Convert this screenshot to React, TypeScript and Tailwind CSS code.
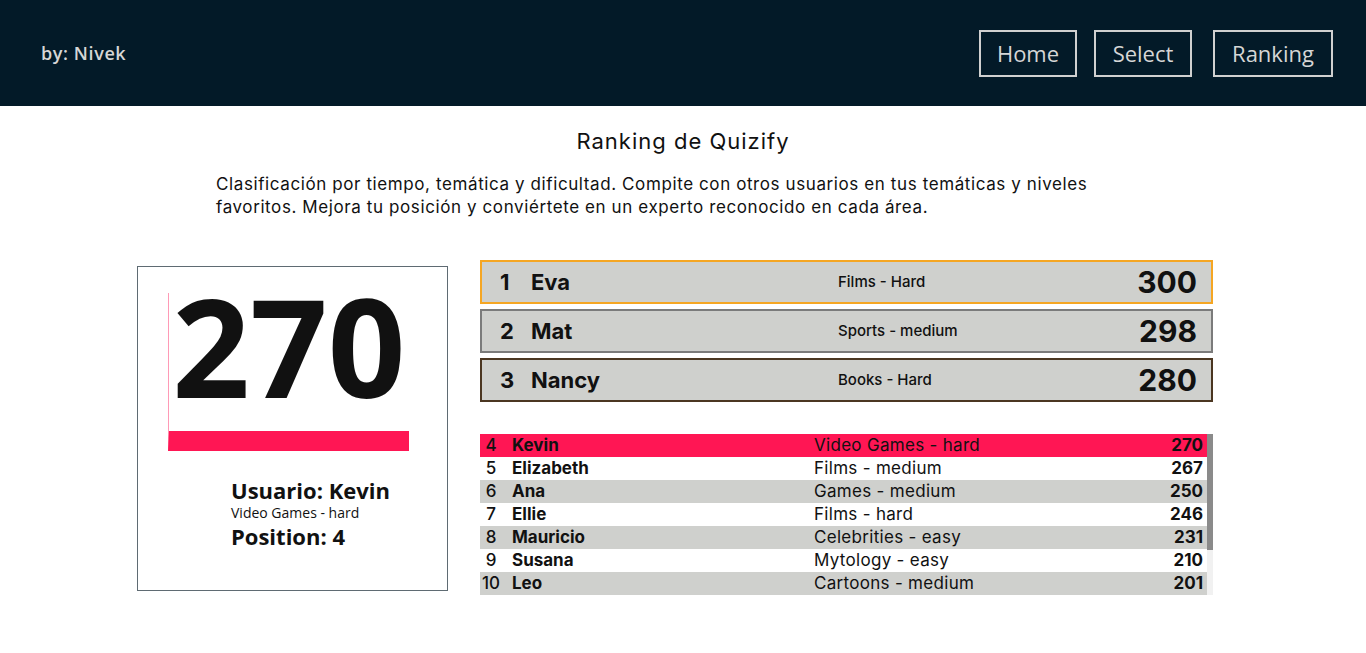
import React from 'react';

const top3 = [
  { pos: 1, name: 'Eva', cat: 'Films - Hard', score: 300, border: 'border-[#f5a623]' },
  { pos: 2, name: 'Mat', cat: 'Sports - medium', score: 298, border: 'border-[#7b7b7b]' },
  { pos: 3, name: 'Nancy', cat: 'Books - Hard', score: 280, border: 'border-[#4b3621]' },
];

const rest = [
  { pos: 4, name: 'Kevin', cat: 'Video Games - hard', score: 270 },
  { pos: 5, name: 'Elizabeth', cat: 'Films - medium', score: 267 },
  { pos: 6, name: 'Ana', cat: 'Games - medium', score: 250 },
  { pos: 7, name: 'Ellie', cat: 'Films - hard', score: 246 },
  { pos: 8, name: 'Mauricio', cat: 'Celebrities - easy', score: 231 },
  { pos: 9, name: 'Susana', cat: 'Mytology - easy', score: 210 },
  { pos: 10, name: 'Leo', cat: 'Cartoons - medium', score: 201 },
];

const grotesk = "font-['Inter','Liberation_Sans',sans-serif]";
const humanist = "font-['Open_Sans','Noto_Sans',sans-serif]";

function Header() {
  return (
    <header className="h-[106px] bg-[#031a28] flex items-center justify-between pl-[41px] pr-[33px]">
      <span className={`${humanist} text-[18px] font-semibold tracking-[0.6px] text-[#d6d6d6]`}>by: Nivek</span>
      <nav className={`${humanist} flex items-center text-[22px] text-[#d6d6d6]`}>
        <a className="w-[98px] h-[47px] border-2 border-[#d0d0d0] flex items-center justify-center">Home</a>
        <a className="ml-[17px] w-[98px] h-[47px] border-2 border-[#d0d0d0] flex items-center justify-center">Select</a>
        <a className="ml-[21px] w-[120px] h-[47px] border-2 border-[#d0d0d0] flex items-center justify-center">Ranking</a>
      </nav>
    </header>
  );
}

function UserCard() {
  return (
    <div className={`${humanist} mt-[6px] w-[311px] h-[325px] border border-[#5f6b73] pt-[26px] pl-[30px]`}>
      <div className="w-[241px] h-[158px] border-l border-l-[#ff9ab6] border-b-[20px] border-b-[#ff1654] text-center text-[136px] leading-[106px] font-bold text-[#111]">
        270
      </div>
      <div className="pl-[63px] pt-[26px] text-[#111]">
        <p className="text-[22px] leading-[26px] font-bold">Usuario: Kevin</p>
        <p className="text-[14px] leading-[20px]">Video Games - hard</p>
        <p className="text-[22px] leading-[26px] font-bold">Position: 4</p>
      </div>
    </div>
  );
}

function Podium() {
  return (
    <div className="flex flex-col gap-[5px]">
      {top3.map((p) => (
        <div
          key={p.pos}
          className={`h-[44px] border-2 ${p.border} bg-[#cfd0cd] flex items-center pl-[18px] pr-[14px] text-[#111]`}
        >
          <span className="w-[31px] text-[22px] font-bold">{p.pos}</span>
          <span className="w-[307px] text-[22px] font-bold">{p.name}</span>
          <span className="flex-1 text-[15px] font-medium">{p.cat}</span>
          <span className="text-[30px] font-bold">{p.score}</span>
        </div>
      ))}
    </div>
  );
}

function RankList() {
  return (
    <div className="mt-[32px] flex">
      <div className="flex-1">
        {rest.map((r, i) => (
          <div
            key={r.pos}
            className={`h-[23px] flex items-center text-[17px] text-[#111] pr-[4px] ${
              r.pos === 4 ? 'bg-[#ff1654]' : i % 2 === 0 ? 'bg-[#cfd0cd]' : 'bg-white'
            }`}
          >
            <span className="w-[22px] text-center font-medium">{r.pos}</span>
            <span className="ml-[10px] w-[302px] font-bold">{r.name}</span>
            <span className="flex-1 tracking-[0.3px]">{r.cat}</span>
            <span className="font-bold">{r.score}</span>
          </div>
        ))}
      </div>
      <div className="w-[6px] bg-[#f1f1f1]">
        <div className="h-[116px] bg-[#8a8a8a]" />
      </div>
    </div>
  );
}

export default function App() {
  return (
    <div className={`${grotesk} min-h-[653px] bg-white`}>
      <Header />
      <main>
        <h1 className="pt-[21px] text-center text-[22px] leading-[28px] tracking-[1px] text-[#111]">Ranking de Quizify</h1>
        <p className="mt-[18px] ml-[216px] w-[900px] text-[17px] leading-[23px] tracking-[0.6px] text-[#111]">
          Clasificación por tiempo, temática y dificultad. Compite con otros usuarios en tus temáticas y niveles
          favoritos. Mejora tu posición y conviértete en un experto reconocido en cada área.
        </p>
        <section className="mt-[41px] pl-[137px] flex items-start gap-[32px]">
          <UserCard />
          <div className="w-[733px]">
            <Podium />
            <RankList />
          </div>
        </section>
      </main>
    </div>
  );
}
